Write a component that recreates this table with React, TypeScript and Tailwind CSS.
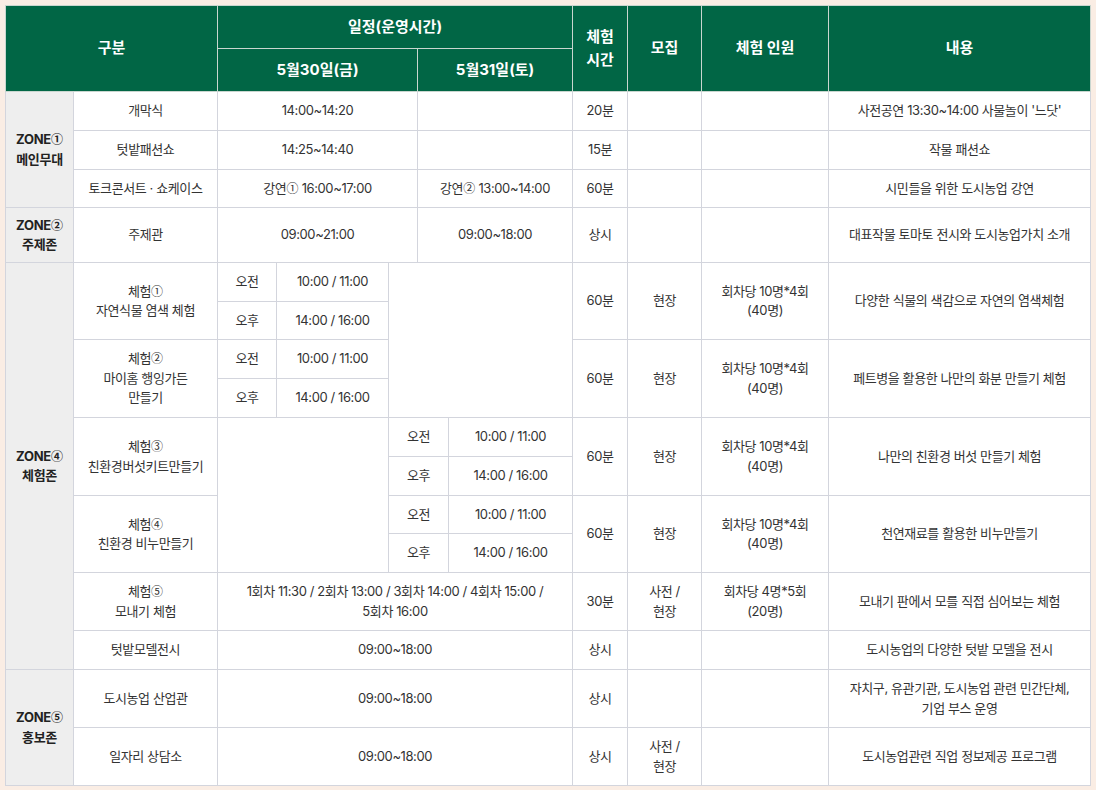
import React from "react";

const th = "border border-[#c9d6cf] bg-[#016645] text-white font-bold text-[15px] leading-[1.5] text-center align-middle px-2";
const td = "border border-[#d3d5dd] text-[13px] leading-[1.5] tracking-[-0.4px] text-center align-middle px-2 text-[#333]";
const zone = "border border-[#d3d5dd] bg-[#eeeeee] text-[13px] leading-[1.5] tracking-[-0.3px] text-center align-middle font-bold text-[#222] px-1";

function C({ c }: { c: string }) {
  return (
    <span
      className="text-[12px] tracking-normal"
      style={{ fontFamily: '"Noto Sans CJK KR", sans-serif' }}
    >
      {c}
    </span>
  );
}

export default function App() {
  return (
    <div
      className="min-h-screen bg-[#faede4] p-[5px]"
      style={{ fontFamily: 'Inter, "Noto Sans CJK KR", "Noto Sans", sans-serif' }}
    >
      <table className="table-fixed border-collapse w-[1085px] bg-white">
        <colgroup>
          <col className="w-[68px]" />
          <col className="w-[144px]" />
          <col className="w-[59px]" />
          <col className="w-[112px]" />
          <col className="w-[29px]" />
          <col className="w-[31px]" />
          <col className="w-[124px]" />
          <col className="w-[55px]" />
          <col className="w-[74px]" />
          <col className="w-[127px]" />
          <col className="w-[262px]" />
        </colgroup>
        <thead>
          <tr className="h-[43px]">
            <th className={th} rowSpan={2} colSpan={2}>구분</th>
            <th className={th} colSpan={5}>일정(운영시간)</th>
            <th className={th} rowSpan={2}>체험<br />시간</th>
            <th className={th} rowSpan={2}>모집</th>
            <th className={th} rowSpan={2}>체험 인원</th>
            <th className={th} rowSpan={2}>내용</th>
          </tr>
          <tr className="h-[43px]">
            <th className={th} colSpan={3}>5월30일(금)</th>
            <th className={th} colSpan={2}>5월31일(토)</th>
          </tr>
        </thead>
        <tbody>
          <tr className="h-[39px]">
            <td className={zone} rowSpan={3}>ZONE<C c="①" /><br />메인무대</td>
            <td className={td}>개막식</td>
            <td className={td} colSpan={3}>14:00~14:20</td>
            <td className={td} colSpan={2}></td>
            <td className={td}>20분</td>
            <td className={td}></td>
            <td className={td}></td>
            <td className={td}>사전공연 13:30~14:00 사물놀이 '느닷'</td>
          </tr>
          <tr className="h-[39px]">
            <td className={td}>텃밭패션쇼</td>
            <td className={td} colSpan={3}>14:25~14:40</td>
            <td className={td} colSpan={2}></td>
            <td className={td}>15분</td>
            <td className={td}></td>
            <td className={td}></td>
            <td className={td}>작물 패션쇼</td>
          </tr>
          <tr className="h-[38px]">
            <td className={td}>토크콘서트 · 쇼케이스</td>
            <td className={td} colSpan={3}>강연<C c="①" /> 16:00~17:00</td>
            <td className={td} colSpan={2}>강연<C c="②" /> 13:00~14:00</td>
            <td className={td}>60분</td>
            <td className={td}></td>
            <td className={td}></td>
            <td className={td}>시민들을 위한 도시농업 강연</td>
          </tr>
          <tr className="h-[55px]">
            <td className={zone}>ZONE<C c="②" /><br />주제존</td>
            <td className={td}>주제관</td>
            <td className={td} colSpan={3}>09:00~21:00</td>
            <td className={td} colSpan={2}>09:00~18:00</td>
            <td className={td}>상시</td>
            <td className={td}></td>
            <td className={td}></td>
            <td className={td}>대표작물 토마토 전시와 도시농업가치 소개</td>
          </tr>
          <tr className="h-[39px]">
            <td className={zone} rowSpan={10}>ZONE<C c="④" /><br />체험존</td>
            <td className={td} rowSpan={2}>체험<C c="①" /><br />자연식물 염색 체험</td>
            <td className={td}>오전</td>
            <td className={td}>10:00 / 11:00</td>
            <td className={td} rowSpan={4} colSpan={3}></td>
            <td className={td} rowSpan={2}>60분</td>
            <td className={td} rowSpan={2}>현장</td>
            <td className={td} rowSpan={2}>회차당 10명*4회<br />(40명)</td>
            <td className={td} rowSpan={2}>다양한 식물의 색감으로 자연의 염색체험</td>
          </tr>
          <tr className="h-[38px]">
            <td className={td}>오후</td>
            <td className={td}>14:00 / 16:00</td>
          </tr>
          <tr className="h-[39px]">
            <td className={td} rowSpan={2}>체험<C c="②" /><br />마이홈 행잉가든<br />만들기</td>
            <td className={td}>오전</td>
            <td className={td}>10:00 / 11:00</td>
            <td className={td} rowSpan={2}>60분</td>
            <td className={td} rowSpan={2}>현장</td>
            <td className={td} rowSpan={2}>회차당 10명*4회<br />(40명)</td>
            <td className={td} rowSpan={2}>페트병을 활용한 나만의 화분 만들기 체험</td>
          </tr>
          <tr className="h-[39px]">
            <td className={td}>오후</td>
            <td className={td}>14:00 / 16:00</td>
          </tr>
          <tr className="h-[39px]">
            <td className={td} rowSpan={2}>체험<C c="③" /><br />친환경버섯키트만들기</td>
            <td className={td} rowSpan={4} colSpan={2}></td>
            <td className={td} colSpan={2}>오전</td>
            <td className={td}>10:00 / 11:00</td>
            <td className={td} rowSpan={2}>60분</td>
            <td className={td} rowSpan={2}>현장</td>
            <td className={td} rowSpan={2}>회차당 10명*4회<br />(40명)</td>
            <td className={td} rowSpan={2}>나만의 친환경 버섯 만들기 체험</td>
          </tr>
          <tr className="h-[39px]">
            <td className={td} colSpan={2}>오후</td>
            <td className={td}>14:00 / 16:00</td>
          </tr>
          <tr className="h-[38px]">
            <td className={td} rowSpan={2}>체험<C c="④" /><br />친환경 비누만들기</td>
            <td className={td} colSpan={2}>오전</td>
            <td className={td}>10:00 / 11:00</td>
            <td className={td} rowSpan={2}>60분</td>
            <td className={td} rowSpan={2}>현장</td>
            <td className={td} rowSpan={2}>회차당 10명*4회<br />(40명)</td>
            <td className={td} rowSpan={2}>천연재료를 활용한 비누만들기</td>
          </tr>
          <tr className="h-[39px]">
            <td className={td} colSpan={2}>오후</td>
            <td className={td}>14:00 / 16:00</td>
          </tr>
          <tr className="h-[58px]">
            <td className={td}>체험<C c="⑤" /><br />모내기 체험</td>
            <td className={td} colSpan={5}>1회차 11:30 / 2회차 13:00 / 3회차 14:00 / 4회차 15:00 /<br />5회차 16:00</td>
            <td className={td}>30분</td>
            <td className={td}>사전 /<br />현장</td>
            <td className={td}>회차당 4명*5회<br />(20명)</td>
            <td className={td}>모내기 판에서 모를 직접 심어보는 체험</td>
          </tr>
          <tr className="h-[39px]">
            <td className={td}>텃밭모델전시</td>
            <td className={td} colSpan={5}>09:00~18:00</td>
            <td className={td}>상시</td>
            <td className={td}></td>
            <td className={td}></td>
            <td className={td}>도시농업의 다양한 텃밭 모델을 전시</td>
          </tr>
          <tr className="h-[58px]">
            <td className={zone} rowSpan={2}>ZONE<C c="⑤" /><br />홍보존</td>
            <td className={td}>도시농업 산업관</td>
            <td className={td} colSpan={5}>09:00~18:00</td>
            <td className={td}>상시</td>
            <td className={td}></td>
            <td className={td}></td>
            <td className={td}>자치구, 유관기관, 도시농업 관련 민간단체,<br />기업 부스 운영</td>
          </tr>
          <tr className="h-[58px]">
            <td className={td}>일자리 상담소</td>
            <td className={td} colSpan={5}>09:00~18:00</td>
            <td className={td}>상시</td>
            <td className={td}>사전 /<br />현장</td>
            <td className={td}></td>
            <td className={td}>도시농업관련 직업 정보제공 프로그램</td>
          </tr>
        </tbody>
      </table>
    </div>
  );
}
